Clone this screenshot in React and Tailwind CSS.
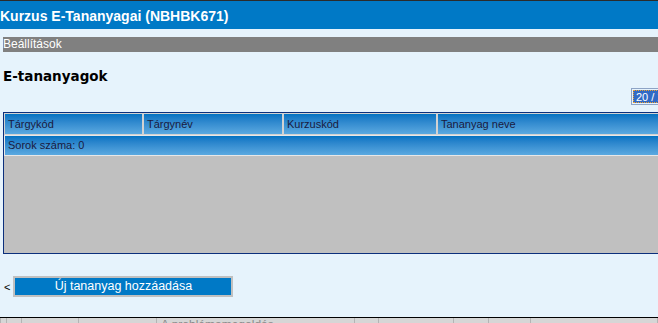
export default function App() {
  const columns = [
    { label: "Tárgykód", w: "w-[139px]" },
    { label: "Tárgynév", w: "w-[140px]" },
    { label: "Kurzuskód", w: "w-[154px]" },
    { label: "Tananyag neve", w: "w-[240px]" },
  ]

  const statusCells = ["w-[1px]", "w-[6px]", "w-[15px]", "w-[57px]", "w-[78px]", "w-[198px]", "w-[24px]", "w-[75px]", "w-[35px]", "w-[42px]", "w-[127px]"]

  return (
    <div className="w-[658px] h-[323px] overflow-hidden bg-[#e6f3fc] flex flex-col font-['Liberation_Sans',Arial,sans-serif]">
      {/* Title bar */}
      <div className="h-px bg-[#2b2b2b]" />
      <div className="h-[28px] pt-[8px] bg-[#0079c6] text-white text-[14px] leading-[14px] font-bold whitespace-nowrap">
        Kurzus E-Tananyagai (NBHBK671)
      </div>

      {/* Settings bar */}
      <div className="mt-[8px] ml-[3px] h-[15px] bg-[#808080] text-white text-[12px] leading-[15px] whitespace-nowrap">
        Beállítások
      </div>

      <h1 className="mt-[16px] ml-[3px] h-[16px] text-[13.5px] leading-[16px] font-bold text-black font-['DejaVu_Sans',sans-serif]">
        E-tananyagok
      </h1>

      {/* Page size select */}
      <div className="mt-[4px] flex justify-end">
        <div className="w-[40px] -mr-[13px] h-[17px] border border-[#8ea4c6] p-px">
          <div className="h-full bg-[#316ac5] border border-dotted border-[#f0a030] text-white text-[11px] leading-[13px] pl-[2px] whitespace-nowrap">
            20 / 20
          </div>
        </div>
      </div>

      {/* Grid */}
      <div className="mt-[7px] ml-[3px] w-[680px] border border-r-0 border-[#0b2f7c] flex flex-col">
        <div className="flex">
          {columns.map((col) => (
            <div
              key={col.label}
              className={`${col.w} h-[22px] shrink-0 border border-[#d2d2d2] bg-gradient-to-b from-[#0073c2] to-[#5aa9e0] text-[#1a1a40] text-[11px] leading-[20px] pl-[3px] whitespace-nowrap`}
            >
              {col.label}
            </div>
          ))}
        </div>
        <div className="h-[21px] border border-[#e8e8e8] bg-gradient-to-b from-[#0073c2] to-[#5aa9e0] text-[#1a1a40] text-[11px] leading-[19px] pl-[3px] whitespace-nowrap">
          Sorok száma: 0
        </div>
        <div className="h-[97px] bg-[#c0c0c0]" />
      </div>

      {/* Add button */}
      <div className="mt-[22px] flex items-center pl-[4px]">
        <span className="text-[11px] leading-[12px] text-black">&lt;</span>
        <button className="ml-[3px] w-[220px] h-[21px] border-2 border-[#c0c0c0] bg-[#0079c6] text-white text-[12.5px] leading-[17px] text-center whitespace-nowrap">
          Új tananyag hozzáadása
        </button>
      </div>

      <div className="flex-1" />

      {/* Status strip */}
      <div className="h-px bg-black" />
      <div className="h-[5px] bg-[#d6d6d6] flex overflow-hidden">
        {statusCells.map((w, i) => (
          <div key={i} className={`${w} shrink-0 h-full border-r border-[#b4b4b4] overflow-hidden`}>
            {i === 5 && (
              <div className="pl-[4px] pt-px text-[12px] leading-[12px] text-[#8a8a8a] whitespace-nowrap">
                A problémamegoldás
              </div>
            )}
          </div>
        ))}
      </div>
    </div>
  )
}
